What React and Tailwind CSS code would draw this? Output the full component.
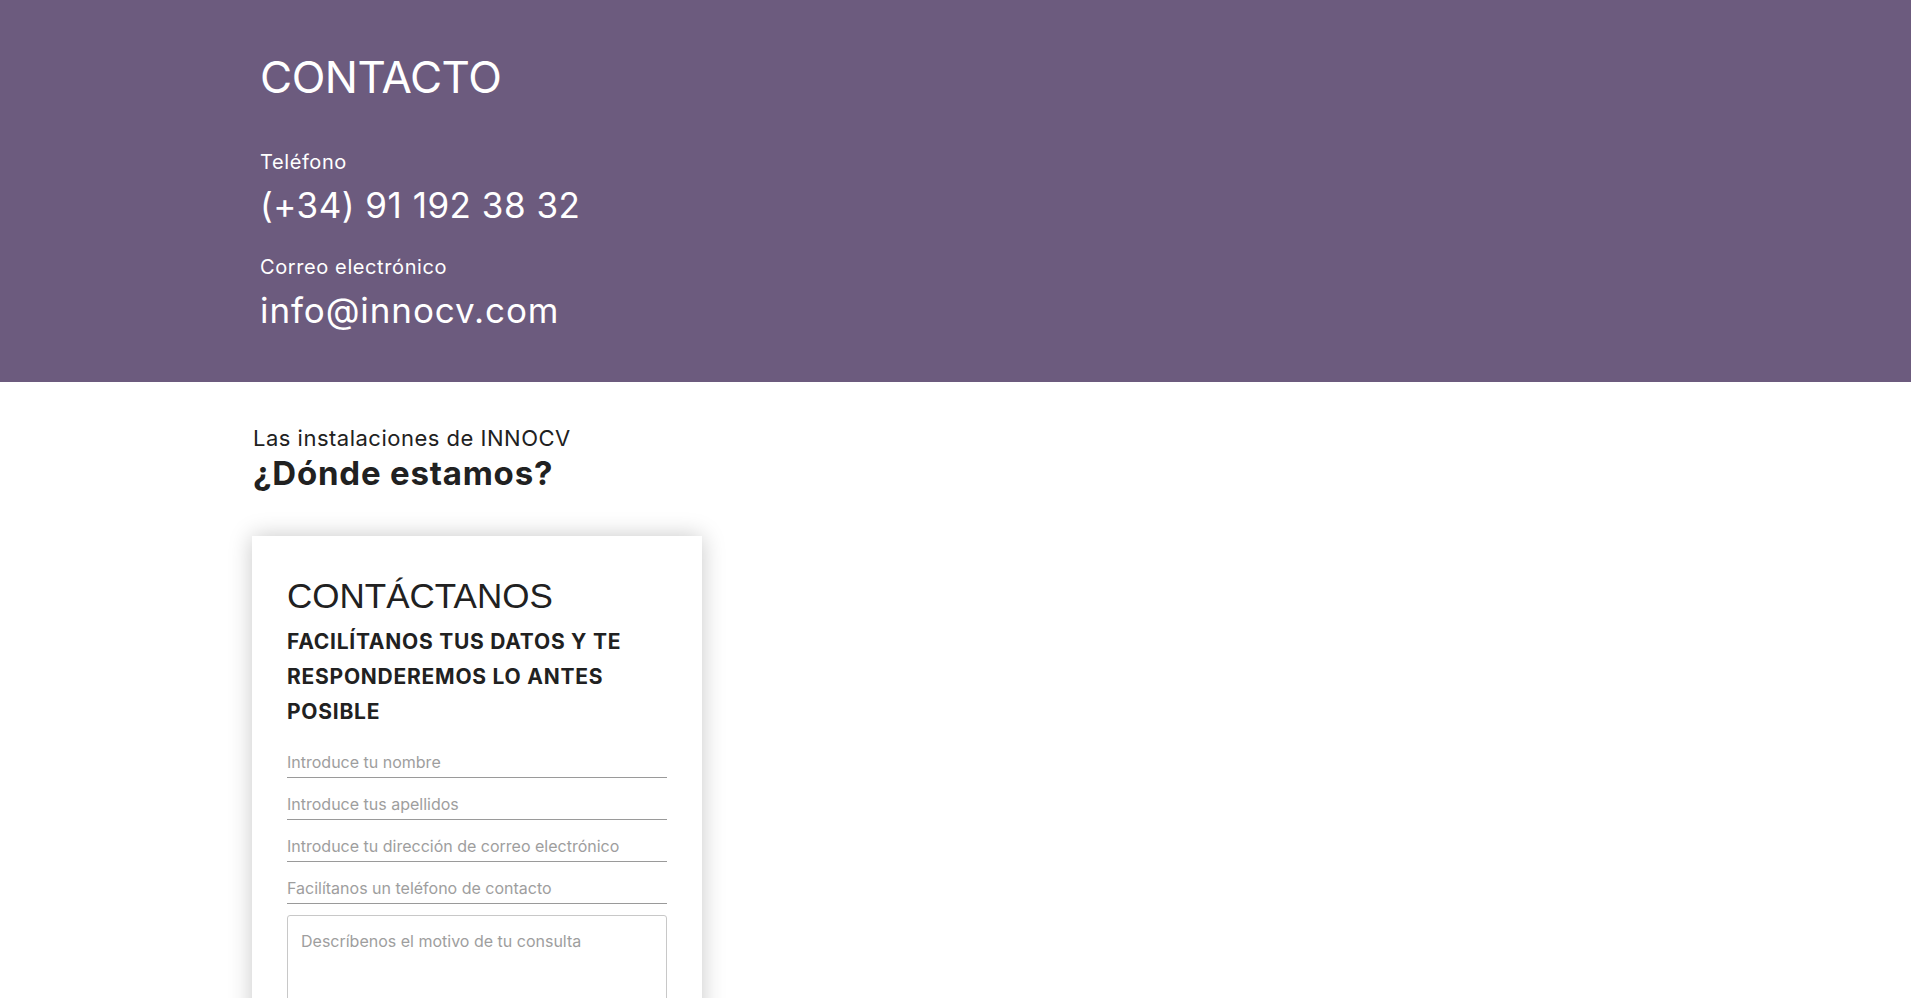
import { useState } from "react";

const fields = [
  { name: "nombre", placeholder: "Introduce tu nombre" },
  { name: "apellidos", placeholder: "Introduce tus apellidos" },
  { name: "email", placeholder: "Introduce tu dirección de correo electrónico" },
  { name: "telefono", placeholder: "Facilítanos un teléfono de contacto" },
];

const App = () => {
  const [form, setForm] = useState({});

  const handleChange = (e) => setForm((prev) => ({ ...prev, [e.target.name]: e.target.value }));

  return (
    <div className="min-h-screen bg-white text-[#212121] font-['Inter',sans-serif]">
      {/* Cabecera de contacto */}
      <section className="bg-[#6c5b7e] text-white pl-[260px] pt-[49px] pb-[51px]">
        <h1 className="text-[44px] leading-[56px] font-normal tracking-[-0.5px]">CONTACTO</h1>

        <p className="mt-[43px] text-[20px] leading-[28px] tracking-[0.6px]">Teléfono</p>
        <p className="mt-[8px] text-[35px] leading-[42px] tracking-[0.5px]">(+34) 91 192 38 32</p>

        <p className="mt-[27px] text-[20px] leading-[28px] tracking-[0.6px]">Correo electrónico</p>
        <p className="mt-[8px] text-[35px] leading-[42px] tracking-[0.9px]">info@innocv.com</p>
      </section>

      {/* Dónde estamos */}
      <section className="pl-[253px] pt-[44px] pb-24">
        <p className="text-[22px] leading-[24px] tracking-[0.5px]">Las instalaciones de INNOCV</p>
        <h2 className="mt-[7px] text-[33px] leading-[32px] font-bold tracking-[0.8px]">¿Dónde estamos?</h2>

        <div className="mt-[47px] -ml-px w-[450px] bg-white shadow-[0_0_22px_rgba(0,0,0,0.22)] px-[35px] pt-[40px] pb-16">
          <h3 className="font-['Liberation_Sans',Arial,sans-serif] text-[35px] leading-[40px]">CONTÁCTANOS</h3>
          <p className="mt-[8px] text-[21px] leading-[35px] font-bold uppercase tracking-[0.75px]">
            Facilítanos tus datos y te responderemos lo antes posible
          </p>

          <form className="mt-[7px]" onSubmit={(e) => e.preventDefault()}>
            {fields.map((f) => (
              <input
                key={f.name}
                name={f.name}
                value={form[f.name] || ""}
                onChange={handleChange}
                placeholder={f.placeholder}
                className="block w-full h-[42px] pt-[10px] border-b border-[#9a9a9a] text-[16px] outline-none placeholder:text-[#9e9e9e]"
              />
            ))}

            <textarea
              name="consulta"
              value={form.consulta || ""}
              onChange={handleChange}
              placeholder="Descríbenos el motivo de tu consulta"
              className="mt-[11px] block w-full h-[150px] resize-none rounded-[3px] border border-[#c8c8c8] px-[13px] pt-[13px] text-[16px] leading-[24px] outline-none placeholder:text-[#9e9e9e]"
            />
          </form>
        </div>
      </section>
    </div>
  );
};

export default App;
